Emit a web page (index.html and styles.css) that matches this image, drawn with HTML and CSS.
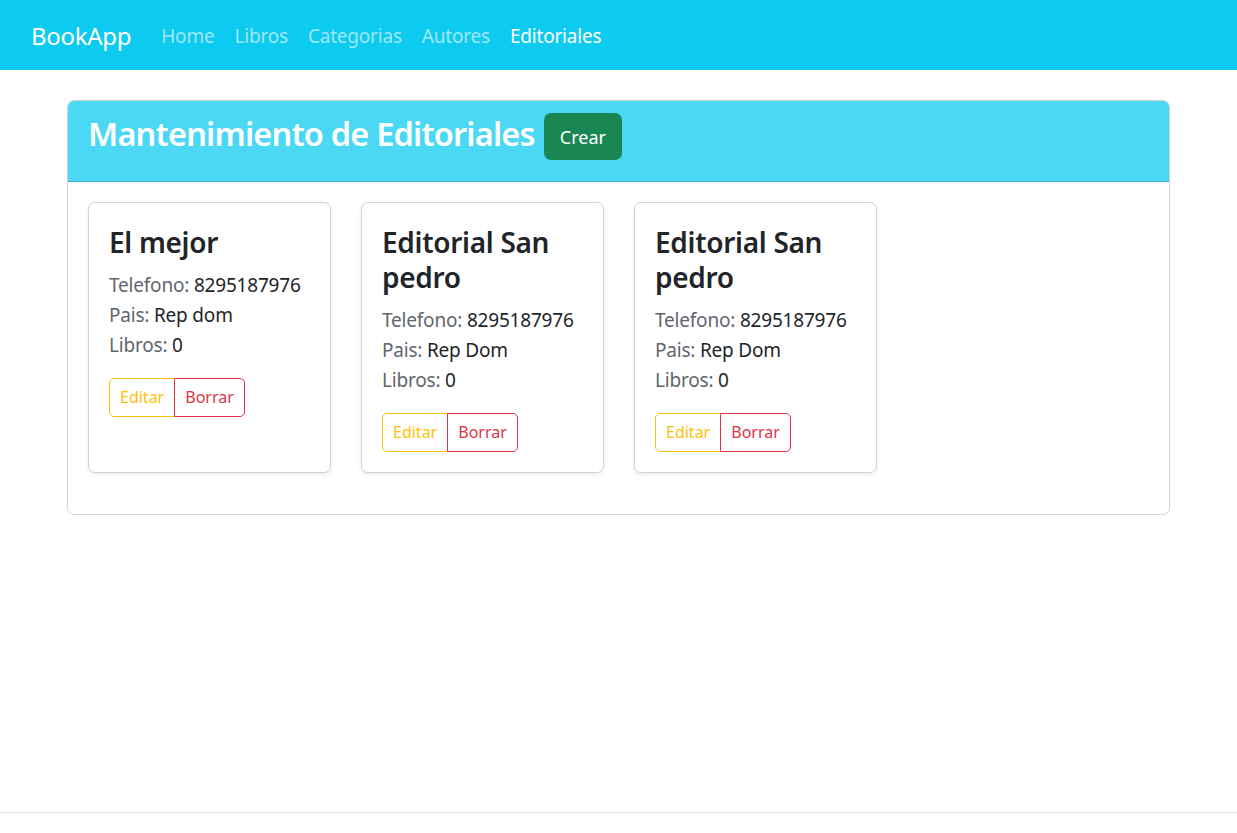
FILE: index.html
```html
<!DOCTYPE html>
<html lang="es">
<head>
<meta charset="utf-8">
<title>BookApp</title>
<link rel="stylesheet" href="styles.css">
</head>
<body>
<nav class="navbar">
  <a class="brand" href="#">BookApp</a>
  <ul class="nav">
    <li><a class="nav-link" href="#">Home</a></li>
    <li><a class="nav-link" href="#">Libros</a></li>
    <li><a class="nav-link" href="#">Categorias</a></li>
    <li><a class="nav-link" href="#">Autores</a></li>
    <li><a class="nav-link active" href="#">Editoriales</a></li>
  </ul>
</nav>
<main class="container">
  <section class="panel">
    <header class="panel-header">
      <h2 class="panel-title">Mantenimiento de Editoriales</h2>
      <a class="btn btn-success" href="#">Crear</a>
    </header>
    <div class="panel-body">
      <div class="grid">
        <article class="card">
          <h4 class="card-title">El mejor</h4>
          <div class="info">
            <div><span class="label">Telefono:</span> 8295187976</div>
            <div><span class="label">Pais:</span> Rep dom</div>
            <div><span class="label">Libros:</span> 0</div>
          </div>
          <div class="btn-group">
            <a class="btn-sm btn-warning" href="#">Editar</a><a class="btn-sm btn-danger" href="#">Borrar</a>
          </div>
        </article>
        <article class="card">
          <h4 class="card-title">Editorial San pedro</h4>
          <div class="info">
            <div><span class="label">Telefono:</span> 8295187976</div>
            <div><span class="label">Pais:</span> Rep Dom</div>
            <div><span class="label">Libros:</span> 0</div>
          </div>
          <div class="btn-group">
            <a class="btn-sm btn-warning" href="#">Editar</a><a class="btn-sm btn-danger" href="#">Borrar</a>
          </div>
        </article>
        <article class="card">
          <h4 class="card-title">Editorial San pedro</h4>
          <div class="info">
            <div><span class="label">Telefono:</span> 8295187976</div>
            <div><span class="label">Pais:</span> Rep Dom</div>
            <div><span class="label">Libros:</span> 0</div>
          </div>
          <div class="btn-group">
            <a class="btn-sm btn-warning" href="#">Editar</a><a class="btn-sm btn-danger" href="#">Borrar</a>
          </div>
        </article>
      </div>
    </div>
  </section>
</main>
<footer class="footer"></footer>
</body>
</html>
```

FILE: styles.css
```css
* { box-sizing: border-box; }
html, body { margin: 0; padding: 0; }
body {
  font-family: "Noto Sans", "Open Sans", sans-serif;
  font-size: 20px;
  line-height: 1.5;
  color: #212529;
  background: #fff;
  min-height: 833px;
  position: relative;
}
a { text-decoration: none; }

.navbar {
  height: 70px;
  background: #0dcaf0;
  display: flex;
  align-items: center;
  padding: 2px 31px 0;
}
.brand {
  color: #fff;
  font-size: 24px;
  margin-right: 20px;
  letter-spacing: -0.3px;
}
.nav {
  display: flex;
  list-style: none;
  margin: 0;
  padding: 0;
}
.nav-link {
  display: block;
  padding: 10px 10px;
  color: rgba(255,255,255,0.6);
  font-size: 19px;
  letter-spacing: -0.2px;
}
.nav-link.active { color: #fff; }

.container {
  padding: 30px 67px 0 67px;
}
.panel {
  border: 1px solid rgba(0,0,0,0.175);
  border-radius: 7px;
  overflow: hidden;
}
.panel-header {
  background: #4ad8f4;
  border-bottom: 1px solid rgba(0,0,0,0.175);
  height: 81px;
  padding: 12px 20px 0;
  display: flex;
  align-items: flex-start;
}
.panel-title {
  margin: 1px 0 0;
  color: #fff;
  font-size: 32.5px;
  font-weight: 600;
  line-height: 39px;
  letter-spacing: -0.8px;
}
.btn {
  display: inline-block;
  font-size: 18px;
  font-weight: 400;
  line-height: 30px;
  padding: 7.5px 15px;
  border-radius: 7px;
  border: 1px solid transparent;
}
.btn-success {
  background: #198754;
  color: #fff;
  margin-left: 9px;
}

.panel-body { padding: 20px 20px 20px; }
.grid {
  display: flex;
  flex-wrap: wrap;
  gap: 30px;
}
.card {
  width: 243px;
  border: 1px solid rgba(0,0,0,0.175);
  border-radius: 7px;
  box-shadow: 0 2px 4px rgba(0,0,0,0.075);
  padding: 20px;
  margin-bottom: 21px;
}
.card-title {
  margin: 2px 0 10px;
  font-size: 28px;
  font-weight: 600;
  line-height: 35px;
  letter-spacing: -0.3px;
}
.info { margin-bottom: 18px; font-size: 19px; line-height: 30px; letter-spacing: -0.2px; }
.label { color: #5f666d; }

.btn-group { display: inline-flex; }
.btn-sm {
  display: inline-block;
  font-size: 16px;
  line-height: 27px;
  padding: 5px 10px;
  border: 1px solid;
  background: #fff;
}
.btn-warning {
  color: #ffc107;
  border-color: #ffc107;
  border-radius: 5px 0 0 5px;
}
.btn-danger {
  color: #dc3545;
  border-color: #dc3545;
  border-radius: 0 5px 5px 0;
  margin-left: -1px;
}

.footer {
  position: absolute;
  left: 0;
  right: 0;
  bottom: 0;
  height: 21px;
  border-top: 1px solid #dee2e6;
}
```
